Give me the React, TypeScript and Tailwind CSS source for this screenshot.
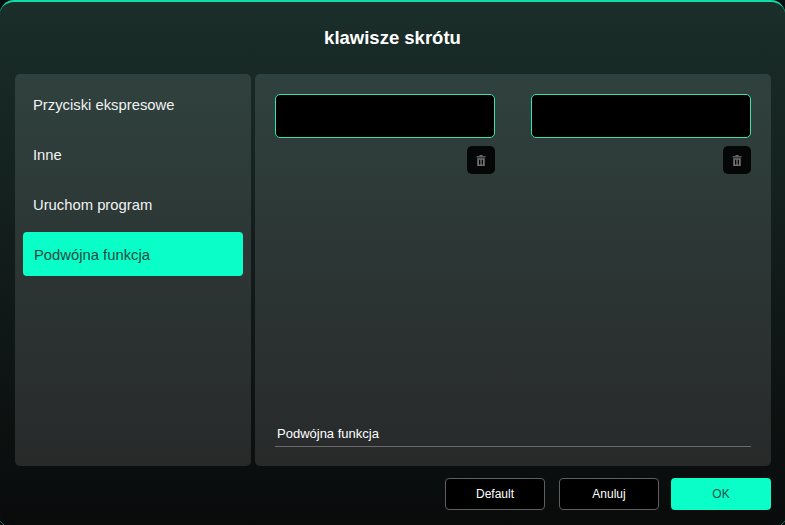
import React from "react";

const font = { fontFamily: '"Liberation Sans", Arial, sans-serif' };

function Trash() {
  return (
    <svg width="10" height="11" viewBox="0 0 10 11" fill="#6f6f6f">
      <rect x="3.5" y="0" width="3" height="1.2" />
      <rect x="0.5" y="1.2" width="9" height="1.3" />
      <path fillRule="evenodd" d="M1.2 3.2h7.6V11H1.2zM3 4.8v4.6h1.3V4.8zM5.7 4.8v4.6H7V4.8z" />
    </svg>
  );
}

function Slot() {
  return (
    <div className="flex w-[220px] flex-col items-end gap-2">
      <div className="h-11 w-full rounded-[5px] border border-[#3fe0b0] bg-black" />
      <button className="flex h-7 w-7 items-center justify-center rounded-[5px] bg-[#050706]">
        <Trash />
      </button>
    </div>
  );
}

function Item({ label, active }: { label: string; active?: boolean }) {
  return (
    <div
      className={
        active
          ? "flex h-11 items-center rounded-[4px] bg-[#0affc8] pl-[11px] pt-0.5 text-[14.8px] text-[#1c4a44]"
          : "flex h-11 items-center pl-[10px] pt-0.5 text-[14.8px] text-[#f2f2f2]"
      }
    >
      {label}
    </div>
  );
}

function Btn({ label, primary }: { label: string; primary?: boolean }) {
  return (
    <button
      className={
        primary
          ? "h-8 w-[100px] rounded-[4px] bg-[#0affc8] text-[12px] text-[#17504a]"
          : "h-8 w-[100px] rounded-[4px] border border-[#5f5f5f] bg-black text-[12px] text-white"
      }
    >
      {label}
    </button>
  );
}

export default function App() {
  return (
    <div style={font} className="relative h-[525px] w-[785px] overflow-hidden bg-[#0a0d0d]">
      <div className="flex h-full flex-col rounded-[14px] border-t-2 border-[#0fdca8] bg-gradient-to-b from-[#1a2e2a] to-[#090b0b] px-[14px]">
        <div className="flex h-[72px] items-center justify-center text-[18.5px] font-bold text-white">
          klawisze skrótu
        </div>
        <div className="flex h-[392px] gap-1 pl-px">
          <div className="flex w-[236px] flex-col gap-1.5 rounded-[5px] bg-gradient-to-b from-[#2f413e] to-[#282a2a] px-2 pt-2">
            <Item label="Przyciski ekspresowe" />
            <Item label="Inne" />
            <Item label="Uruchom program" />
            <Item label="Podwójna funkcja" active />
          </div>
          <div className="flex w-[516px] flex-col rounded-[5px] bg-gradient-to-b from-[#2f413e] to-[#282a2a] px-5 pb-[19px] pt-5">
            <div className="flex flex-1 justify-between">
              <Slot />
              <Slot />
            </div>
            <div className="border-b border-[#6a6a6a] pb-[3px] pl-0.5 text-[13px] text-white">Podwójna funkcja</div>
          </div>
        </div>
        <div className="mt-3 flex justify-end">
          <Btn label="Default" />
          <div className="w-3.5" />
          <Btn label="Anuluj" />
          <div className="w-3" />
          <Btn label="OK" primary />
        </div>
      </div>
      <svg className="absolute bottom-0 left-0" width="5" height="5" viewBox="0 0 5 5" fill="none">
        <path d="M0 1L4 5" stroke="#0f6a58" strokeWidth="1" />
      </svg>
      <svg className="absolute bottom-0 right-0" width="5" height="5" viewBox="0 0 5 5" fill="none">
        <path d="M5 1L1 5" stroke="#0f6a58" strokeWidth="1" />
      </svg>
    </div>
  );
}
